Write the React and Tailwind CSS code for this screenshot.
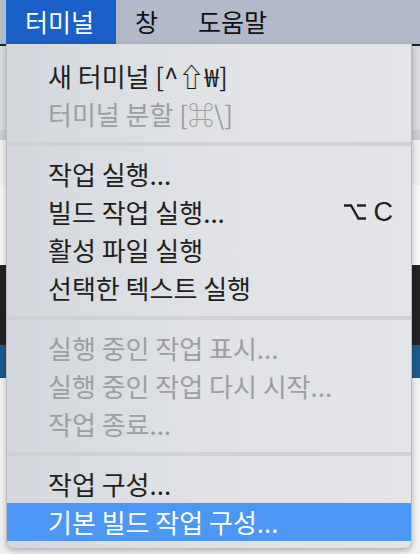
const items = [
  { label: '새 터미널 [^⇧₩]' },
  { label: '터미널 분할 [⌘\\]', disabled: true },
  { sep: true },
  { label: '작업 실행...' },
  { label: '빌드 작업 실행...', shortcut: 'C' },
  { label: '활성 파일 실행' },
  { label: '선택한 텍스트 실행' },
  { sep: true },
  { label: '실행 중인 작업 표시...', disabled: true },
  { label: '실행 중인 작업 다시 시작...', disabled: true },
  { label: '작업 종료...', disabled: true },
  { sep: true },
  { label: '작업 구성...' },
  { label: '기본 빌드 작업 구성...', active: true },
];

function OptionKey() {
  return (
    <svg width="22" height="18" viewBox="0 0 22 18" fill="none" stroke="currentColor" strokeWidth="2.4">
      <path d="M0 2.5 H7 L14.5 15.5 H22" />
      <path d="M13 2.5 H22" />
    </svg>
  );
}

function MenuRow({ item }) {
  if (item.sep) {
    return (
      <div className="h-[22px] flex items-center">
        <div className="h-[4px] w-full bg-[#cfd1d5]" />
      </div>
    );
  }

  let color = 'text-[#1f1f21]';
  if (item.disabled) color = 'text-[#9c9ea2]';
  if (item.active) color = 'text-white bg-[#4c96f6]';

  return (
    <div className={`h-[38px] flex items-center justify-between pl-[41px] pr-[18px] ${color}`}>
      <span className="leading-none">{item.label}</span>
      {item.shortcut && (
        <span className="flex items-center gap-[8px] leading-none font-['Liberation_Sans',sans-serif] text-[27px]">
          <OptionKey />
          {item.shortcut}
        </span>
      )}
    </div>
  );
}

export default function App() {
  return (
    <div className="relative w-[420px] h-[554px] overflow-hidden bg-[#f2f2f2] font-['Noto_Sans_CJK_KR','DejaVu_Sans',sans-serif]">
      {/* menu bar */}
      <div className="h-[44px] flex items-stretch bg-[#b2bac9] text-[25px] text-[#111]">
        <div className="ml-[6px] w-[110px] bg-[#1b5fc8] text-white flex items-center pl-[19px]">터미널</div>
        <div className="flex items-center ml-[19px]">창</div>
        <div className="flex items-center ml-[40px]">도움말</div>
      </div>

      {/* window content behind the menu */}
      <div className="flex flex-col">
        <div className="h-[2px] bg-[#1b2230]" />
        <div className="h-[84px] bg-[#d9dadd]" />
        <div className="h-[10px] bg-[#cdced1]" />
        <div className="h-[45px] bg-[#efefef]" />
        <div className="h-[80px] bg-[#f7f7f7]" />
        <div className="h-[80px] bg-[#232323]" />
        <div className="h-[33px] bg-[#1d5a8a]" />
        <div className="h-[176px] bg-[#f2f2f2]" />
      </div>

      {/* dropdown menu */}
      <div className="absolute left-[6px] top-[44px] w-[406px] h-[505px] rounded-b-[7px] border border-t-0 border-[#b9bbbf] bg-linear-to-r from-[#d4d8de] via-[#e0e2e6] to-[#e4e5e8] shadow-[0_2px_6px_rgba(0,0,0,0.25)] pt-[13px] text-[26px]">
        {items.map((item, i) => (
          <MenuRow key={i} item={item} />
        ))}
      </div>
    </div>
  );
}
